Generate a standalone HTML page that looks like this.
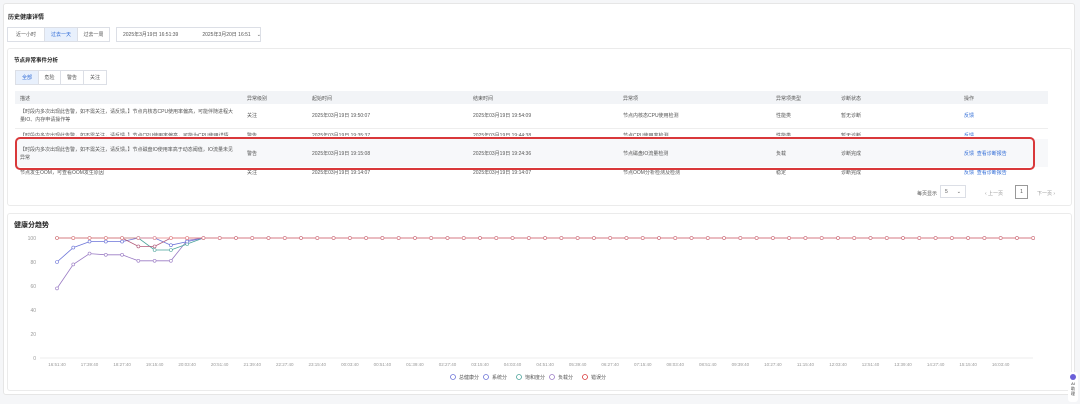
<!DOCTYPE html>
<html><head><meta charset="utf-8">
<style>
*{box-sizing:border-box;margin:0;padding:0}
body{width:1080px;height:404px;background:#f5f6f8;font-family:"Liberation Sans","Noto Sans CJK SC",sans-serif;color:#333;position:relative;overflow:hidden}
.abs{position:absolute}
.outer{left:3px;top:3px;width:1072px;height:392px;background:#fff;border:1px solid #e6e6e6;border-radius:3px}
.card{background:#fff;border:1px solid #ebebeb;border-radius:3px}
.t{font-size:5px;color:#555;white-space:nowrap}
.h{font-size:6px;font-weight:bold;color:#222}
.seg{border:1px solid #dcdfe6;height:15px;font-size:5px;display:flex;align-items:center;justify-content:center;color:#555;background:#fff;white-space:nowrap}
.blue{color:#2f6bd6}
</style></head><body>
<div class="abs outer"></div>
<div class="abs h" style="left:8px;top:12px">历史健康详情</div>
<div class="abs seg" style="left:7px;top:27px;width:38px">近一小时</div>
<div class="abs seg" style="left:44px;top:27px;width:34px;background:#e8f0fc;color:#2f6bd6">过去一天</div>
<div class="abs seg" style="left:77px;top:27px;width:33px">过去一周</div>
<div class="abs seg" style="left:116px;top:27px;width:145px;justify-content:flex-start;padding-left:6px">2025年3月19日 16:51:39<span style="margin-left:24px">2025年3月20日 16:51</span><span style="margin-left:6px">⌄</span></div>

<div class="abs card" style="left:7px;top:48px;width:1065px;height:158px"></div>
<div class="abs h" style="left:14px;top:56px;font-size:5.5px">节点异常事件分析</div>
<div class="abs seg" style="left:15px;top:70px;width:24px;background:#e8f0fc;color:#2f6bd6">全部</div>
<div class="abs seg" style="left:38px;top:70px;width:23px">危险</div>
<div class="abs seg" style="left:60px;top:70px;width:24px">警告</div>
<div class="abs seg" style="left:83px;top:70px;width:24px">关注</div>

<div class="abs" style="left:15px;top:91px;width:1033px;height:13px;background:#f2f4f7"></div>
<div class="abs t" style="left:20px;top:95px">描述</div>
<div class="abs t" style="left:247px;top:95px">异常级别</div>
<div class="abs t" style="left:312px;top:95px">起始时间</div>
<div class="abs t" style="left:473px;top:95px">结束时间</div>
<div class="abs t" style="left:623px;top:95px">异常项</div>
<div class="abs t" style="left:776px;top:95px">异常项类型</div>
<div class="abs t" style="left:841px;top:95px">诊断状态</div>
<div class="abs t" style="left:964px;top:95px">操作</div>

<div class="abs t" style="left:20px;top:108px;line-height:8px">【时段内多次出现此告警，如不需关注，请反馈。】节点内核态CPU使用率偏高，可能伴随进程大<br>量IO、内存申请操作等</div>
<div class="abs t" style="left:247px;top:112px">关注</div>
<div class="abs t" style="left:312px;top:112px">2025年03月19日 19:50:07</div>
<div class="abs t" style="left:473px;top:112px">2025年03月19日 19:54:09</div>
<div class="abs t" style="left:623px;top:112px">节点内核态CPU使用检测</div>
<div class="abs t" style="left:776px;top:112px">性能类</div>
<div class="abs t" style="left:841px;top:112px">暂无诊断</div>
<div class="abs t blue" style="left:964px;top:112px">反馈</div>
<div class="abs" style="left:15px;top:128px;width:1033px;height:1px;background:#eee"></div>

<div class="abs t" style="left:20px;top:132px;height:4px;overflow:hidden">【时段内多次出现此告警，如不需关注，请反馈。】节点CPU使用率偏高，可能为CPU使用详情</div>
<div class="abs t" style="left:247px;top:132px;height:4px;overflow:hidden">警告</div>
<div class="abs t" style="left:312px;top:132px;height:4px;overflow:hidden">2025年03月19日 19:35:37</div>
<div class="abs t" style="left:473px;top:132px;height:4px;overflow:hidden">2025年03月19日 19:44:38</div>
<div class="abs t" style="left:623px;top:132px;height:4px;overflow:hidden">节点CPU使用率检测</div>
<div class="abs t" style="left:776px;top:132px;height:4px;overflow:hidden">性能类</div>
<div class="abs t" style="left:841px;top:132px;height:4px;overflow:hidden">暂无诊断</div>
<div class="abs t blue" style="left:964px;top:132px;height:4px;overflow:hidden">反馈</div>

<div class="abs" style="left:15px;top:139px;width:1033px;height:28px;background:#f7f8fa"></div>
<div class="abs t" style="left:20px;top:146px;line-height:8px">【时段内多次出现此告警，如不需关注，请反馈。】节点磁盘IO使用率高于动态阈值，IO流量未见<br>异常</div>
<div class="abs t" style="left:247px;top:150px">警告</div>
<div class="abs t" style="left:312px;top:150px">2025年03月19日 19:15:08</div>
<div class="abs t" style="left:473px;top:150px">2025年03月19日 19:24:36</div>
<div class="abs t" style="left:623px;top:150px">节点磁盘IO流量检测</div>
<div class="abs t" style="left:776px;top:150px">负载</div>
<div class="abs t" style="left:841px;top:150px">诊断完成</div>
<div class="abs t blue" style="left:964px;top:150px">反馈&nbsp;&nbsp;查看诊断报告</div>

<div class="abs t" style="left:20px;top:169px">节点发生OOM，可查看OOM发生原因</div>
<div class="abs t" style="left:247px;top:169px">关注</div>
<div class="abs t" style="left:312px;top:169px">2025年03月19日 19:14:07</div>
<div class="abs t" style="left:473px;top:169px">2025年03月19日 19:14:07</div>
<div class="abs t" style="left:623px;top:169px">节点OOM分析检测及检测</div>
<div class="abs t" style="left:776px;top:169px">稳定</div>
<div class="abs t" style="left:841px;top:169px">诊断完成</div>
<div class="abs t blue" style="left:964px;top:169px">反馈&nbsp;&nbsp;查看诊断报告</div>

<div class="abs" style="left:15px;top:137px;width:1020px;height:33px;border:2px solid #d9383a;border-radius:5px"></div>

<div class="abs t" style="left:917px;top:190px">每页显示</div>
<div class="abs seg" style="left:940px;top:185px;width:26px;height:13px;justify-content:space-between;padding:0 4px">5<span>⌄</span></div>
<div class="abs t" style="left:985px;top:190px;color:#999">‹ 上一页</div>
<div class="abs seg" style="left:1015px;top:185px;width:13px;height:14px;border-color:#999">1</div>
<div class="abs t" style="left:1037px;top:190px;color:#999">下一页 ›</div>

<div class="abs card" style="left:7px;top:213px;width:1065px;height:178px"></div>
<div class="abs h" style="left:14px;top:220px;font-size:7px">健康分趋势</div>
<svg class="abs" id="ch" style="left:0;top:0" width="1080" height="404"></svg>
<div class="abs" style="left:1068px;top:372px;width:10px;height:30px;background:#fff;border-radius:3px;font-size:4px;text-align:center;color:#333;line-height:5px;padding-top:2px"><div style="width:6px;height:6px;border-radius:50%;background:#6a5fd8;margin:0 auto 1px"></div>AI<br>助<br>理</div>
<script>
var s='',ns=document.getElementById('ch');
function Y(v){return 358-1.2*v}
function X(i){return 57+i*16.27}
[['100',238],['80',262],['60',286],['40',310],['20',334],['0',358]].forEach(function(a){
 s+='<text x="36" y="'+(a[1]+2)+'" font-size="5" fill="#999" text-anchor="end" font-family="Liberation Sans">'+a[0]+'</text>';
 if(a[0]=='0')s+='<line x1="40" x2="1033" y1="'+a[1]+'" y2="'+a[1]+'" stroke="#ddd" stroke-width="0.6"/>';
});
var lab=['16:51:40','17:39:40','18:27:40','19:15:40','20:03:40','20:51:40','21:39:40','22:27:40','23:15:40','00:03:40','00:51:40','01:39:40','02:27:40','03:15:40','04:03:40','04:51:40','05:39:40','06:27:40','07:15:40','08:03:40','08:51:40','09:39:40','10:27:40','11:15:40','12:03:40','12:51:40','13:39:40','14:27:40','15:15:40','16:03:40'];
lab.forEach(function(l,i){s+='<text x="'+X(i*2)+'" y="366" font-size="4.5" fill="#999" text-anchor="middle" font-family="Liberation Sans">'+l+'</text>'});
function ser(vals,c){var p=[];for(var i=0;i<61;i++){var v=i<vals.length?vals[i]:100;p.push(X(i)+','+Y(v))}
 s+='<polyline points="'+p.join(' ')+'" fill="none" stroke="'+c+'" stroke-width="0.8"/>';
 p.forEach(function(q){var a=q.split(',');s+='<circle cx="'+a[0]+'" cy="'+a[1]+'" r="1.5" fill="#fff" stroke="'+c+'" stroke-width="0.6"/>'});}
ser([58,78,87,86,86,81,81,81,98],'#9a7bc4');
ser([100,100,100,100,100,100,90,90,95],'#4aa39a');
ser([80,92,97,97,97,100,100,94,97],'#6c74d8');
ser([100,100,100,100,100,93,93,100],'#b05878');
ser([100],'#e88080');
var lg=[['总健康分','#6c74d8'],['系统分','#6c74d8'],['饱和度分','#4aa39a'],['负载分','#9a7bc4'],['错误分','#d9383a']];
var x0=453;lg.forEach(function(g){s+='<circle cx="'+x0+'" cy="377" r="2.5" fill="none" stroke="'+g[1]+'" stroke-width="0.8"/><text x="'+(x0+6)+'" y="379" font-size="5" fill="#555" font-family="Liberation Sans, Noto Sans CJK SC">'+g[0]+'</text>';x0+=33});
ns.innerHTML=s;
</script>
</body></html>
